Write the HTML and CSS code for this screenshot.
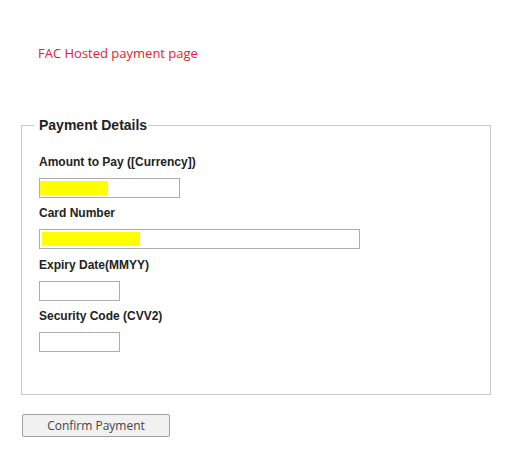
FILE: index.html
```html
<!DOCTYPE html>
<html>
<head>
<meta charset="utf-8">
<link rel="stylesheet" href="styles.css">
</head>
<body>
<div class="page">
  <h1 class="title">FAC Hosted payment page</h1>
  <form class="form">
    <fieldset class="box">
      <legend class="legend">Payment Details</legend>
      <div class="rows">
        <div class="label">Amount to Pay ([Currency])</div>
        <div class="field field-amount"><span class="mask mask-amount"></span></div>
        <div class="label">Card Number</div>
        <div class="field field-card"><span class="mask mask-card"></span></div>
        <div class="label">Expiry Date(MMYY)</div>
        <div class="field field-short"></div>
        <div class="label">Security Code (CVV2)</div>
        <div class="field field-short"></div>
      </div>
    </fieldset>
    <button type="button" class="confirm">Confirm Payment</button>
  </form>
</div>
</body>
</html>
```

FILE: styles.css
```css
html, body {
  margin: 0;
  padding: 0;
  background: #ffffff;
}
.page {
  padding: 44px 0 0 21px;
}
.title {
  margin: 0 0 0 17px;
  font-family: "Open Sans", "Liberation Sans", sans-serif;
  font-weight: normal;
  font-size: 13px;
  line-height: 18px;
  color: #e2222c;
}
.form {
  margin-top: 56px;
}
.box {
  box-sizing: border-box;
  width: 470px;
  height: 277px;
  margin: 0;
  padding: 22px 17px 0 17px;
  border: 1px solid #c8c8c8;
}
.legend {
  margin-left: -5px;
  padding: 0 1px 0 5px;
  font-family: "Liberation Sans", Arial, sans-serif;
  font-weight: bold;
  font-size: 14px;
  line-height: 15px;
  color: #222222;
}
.rows {
  display: flex;
  flex-direction: column;
  align-items: flex-start;
}
.label {
  font-family: "Liberation Sans", Arial, sans-serif;
  font-weight: bold;
  font-size: 12px;
  line-height: 14px;
  color: #222222;
  margin-bottom: 9px;
}
.field {
  box-sizing: border-box;
  height: 20px;
  border: 1px solid #adadad;
  background: #ffffff;
  padding: 2px 2px 2px 0;
  margin-bottom: 8px;
  display: flex;
}
.field-amount { width: 141px; }
.field-card { width: 321px; padding-left: 2px; margin-bottom: 9px; }
.field-short { width: 81px; }
.mask {
  display: block;
  height: 14px;
  background: #ffff00;
}
.mask-amount { width: 68px; }
.mask-card { width: 98px; }
.confirm {
  display: block;
  box-sizing: border-box;
  margin: 19px 0 0 1px;
  width: 148px;
  height: 23px;
  padding: 0;
  border: 1px solid #a0a0a0;
  border-radius: 2px;
  background: #f1f1f1;
  font-family: "Open Sans", "Liberation Sans", sans-serif;
  font-size: 12px;
  color: #444444;
}
```
